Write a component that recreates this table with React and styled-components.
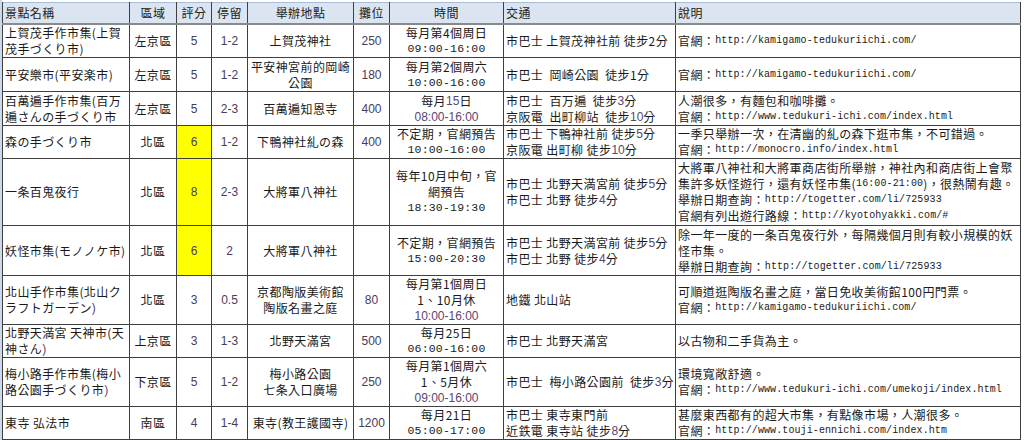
import React from 'react';
import styled, { createGlobalStyle } from 'styled-components';

const GlobalStyle = createGlobalStyle`
  html, body {
    margin: 0;
    padding: 0;
    background: #ffffff;
  }
  body {
    font-family: "Noto Sans CJK TC", "Noto Sans CJK JP", sans-serif;
    color: #1a1a1a;
  }
`;

const columns = [
  { key: 'name', label: '景點名稱', width: 127, align: 'left' },
  { key: 'area', label: '區域', width: 47, align: 'center' },
  { key: 'score', label: '評分', width: 35, align: 'center' },
  { key: 'stay', label: '停留', width: 36, align: 'center' },
  { key: 'place', label: '舉辦地點', width: 106, align: 'center' },
  { key: 'stalls', label: '攤位', width: 36, align: 'center' },
  { key: 'time', label: '時間', width: 114, align: 'center' },
  { key: 'traffic', label: '交通', width: 172, align: 'left' },
  { key: 'note', label: '說明', width: 345, align: 'left' },
];

const numericKeys = ['score', 'stay', 'stalls'];

export default function App() {
  return (
    <>
      <GlobalStyle />
      <Page>
        <Table>
          <colgroup>
            {columns.map((c) => (
              <col key={c.key} style={{ width: c.width }} />
            ))}
          </colgroup>
          <thead>
            <tr>
              {columns.map((c) => (
                <HeadCell key={c.key} $align={c.align}>
                  {c.label}
                </HeadCell>
              ))}
            </tr>
          </thead>
          <tbody>
            {rows.map((row, i) => (
              <Row key={i} $h={row.h}>
                {columns.map((c) => {
                  const value = row[c.key];
                  const lines = Array.isArray(value) ? value : [value];
                  return (
                    <Cell
                      key={c.key}
                      $align={c.align}
                      $mark={c.key === 'score' && row.mark}
                      $numeric={numericKeys.includes(c.key)}
                    >
                      {lines.map((line, j) => (
                        <Line key={j}>{line}</Line>
                      ))}
                    </Cell>
                  );
                })}
              </Row>
            ))}
          </tbody>
        </Table>
      </Page>
    </>
  );
}

// --- STYLED COMPONENTS ---

const Page = styled.div`
  padding: 2px 0 0 0;
  border-left: 2px solid #cbd9ea;
  width: 1018px;
`;

const Table = styled.table`
  width: 1018px;
  table-layout: fixed;
  border-collapse: collapse;
  font-size: 12px;
  letter-spacing: 0.4px;
  border-top: 1px solid #a9bdd6;
`;

const HeadCell = styled.th`
  height: 20px;
  padding: 0 2px;
  background: #dbe5f1;
  font-weight: normal;
  color: #222;
  text-align: ${(p) => p.$align};
  border-left: 1px solid #3f3f3f;
  border-right: 1px solid #3f3f3f;
  border-bottom: 2px solid #8a8a8a;
  line-height: 16px;
  white-space: nowrap;
`;

const Row = styled.tr`
  height: ${(p) => p.$h}px;
`;

const Cell = styled.td`
  padding: 0 2px;
  border: 1px solid #3f3f3f;
  vertical-align: middle;
  text-align: ${(p) => p.$align};
  white-space: pre;
  overflow: hidden;
  background: ${(p) => (p.$mark ? '#ffff00' : '#ffffff')};
  font-family: ${(p) =>
    p.$numeric
      ? '"Liberation Sans", Arial, sans-serif'
      : '"Noto Sans CJK TC", "Noto Sans CJK JP", sans-serif'};
  color: ${(p) => (p.$numeric ? '#4a3b5a' : '#1a1a1a')};
  letter-spacing: ${(p) => (p.$numeric ? '0' : '0.4px')};
`;

const Line = styled.div`
  height: 16px;
  line-height: 16px;
`;

const Num = styled.span`
  font-family: "Liberation Sans", Arial, sans-serif;
  color: #5a4670;
  letter-spacing: 0;
  vertical-align: top;
`;

const Mono = styled.span`
  font-family: "Liberation Mono", "Courier New", monospace;
  font-size: 11.5px;
  letter-spacing: 0.2px;
  vertical-align: top;
`;

const Url = styled.span`
  font-family: "Liberation Mono", "Courier New", monospace;
  font-size: 10px;
  letter-spacing: 0.1px;
  vertical-align: top;
`;

const rows = [
  {
    h: 33,
    name: ['上賀茂手作市集(上賀', '茂手づくり市)'],
    area: '左京區',
    score: '5',
    stay: '1-2',
    place: '上賀茂神社',
    stalls: '250',
    time: ['每月第4個周日', <Mono>09:00-16:00</Mono>],
    traffic: '市巴士 上賀茂神社前 徒步2分',
    note: [<>官網：<Url>http://kamigamo-tedukuriichi.com/</Url></>],
  },
  {
    h: 34,
    name: '平安樂市(平安楽市)',
    area: '左京區',
    score: '5',
    stay: '1-2',
    place: ['平安神宮前的岡崎', '公園'],
    stalls: '180',
    time: ['每月第2個周六', <Mono>10:00-16:00</Mono>],
    traffic: '市巴士  岡崎公園  徒步1分',
    note: [<>官網：<Url>http://kamigamo-tedukuriichi.com/</Url></>],
  },
  {
    h: 34,
    name: ['百萬遍手作市集(百万', '遍さんの手づくり市'],
    area: '左京區',
    score: '5',
    stay: '2-3',
    place: '百萬遍知恩寺',
    stalls: '400',
    time: [<>每月<Num>15</Num>日</>, <Num>08:00-16:00</Num>],
    traffic: [
      <>市巴士  百万遍  徒步<Num>3</Num>分</>,
      <>京阪電  出町柳站  徒步<Num>10</Num>分</>,
    ],
    note: [
      '人潮很多，有麵包和咖啡攤。',
      <>官網：<Url>http://www.tedukuri-ichi.com/index.html</Url></>,
    ],
  },
  {
    h: 33,
    mark: true,
    name: '森の手づくり市',
    area: '北區',
    score: '6',
    stay: '1-2',
    place: '下鴨神社糺の森',
    stalls: '400',
    time: ['不定期，官網預告', <Mono>10:00-16:00</Mono>],
    traffic: [
      <>市巴士 下鴨神社前 徒步<Num>5</Num>分</>,
      <>京阪電 出町柳 徒步<Num>10</Num>分</>,
    ],
    note: [
      '一季只舉辦一次，在清幽的糺の森下逛市集，不可錯過。',
      <>官網：<Url>http://monocro.info/index.html</Url></>,
    ],
  },
  {
    h: 67,
    mark: true,
    name: '一条百鬼夜行',
    area: '北區',
    score: '8',
    stay: '2-3',
    place: '大將軍八神社',
    stalls: '',
    time: ['每年10月中旬，官', '網預告', <Mono>18:30-19:30</Mono>],
    traffic: [
      <>市巴士 北野天満宮前 徒步<Num>5</Num>分</>,
      <>市巴士 北野 徒步<Num>4</Num>分</>,
    ],
    note: [
      '大將軍八神社和大將軍商店街所舉辦，神社內和商店街上會聚',
      <>集許多妖怪遊行，還有妖怪市集(<Url>16:00-21:00</Url>)，很熱鬧有趣。</>,
      <>舉辦日期查詢：<Url>http://togetter.com/li/725933</Url></>,
      <>官網有列出遊行路線：<Url>http://kyotohyakki.com/#</Url></>,
    ],
  },
  {
    h: 50,
    mark: true,
    name: '妖怪市集(モノノケ市)',
    area: '北區',
    score: '6',
    stay: '2',
    place: '大將軍八神社',
    stalls: '',
    time: ['不定期，官網預告', <Mono>15:00-20:30</Mono>],
    traffic: [
      <>市巴士 北野天満宮前 徒步<Num>5</Num>分</>,
      <>市巴士 北野 徒步<Num>4</Num>分</>,
    ],
    note: [
      '除一年一度的一条百鬼夜行外，每隔幾個月則有較小規模的妖',
      '怪市集。',
      <>舉辦日期查詢：<Url>http://togetter.com/li/725933</Url></>,
    ],
  },
  {
    h: 49,
    name: ['北山手作市集(北山ク', <>ラフトガーデン<Num>)</Num></>],
    area: '北區',
    score: '3',
    stay: '0.5',
    place: ['京都陶版美術館', '陶版名畫之庭'],
    stalls: '80',
    time: ['每月第1個周日', '1、10月休', <Num>10:00-16:00</Num>],
    traffic: '地鐵 北山站',
    note: [
      '可順道逛陶版名畫之庭，當日免收美術館100円門票。',
      <>官網：<Url>http://kamigamo-tedukuriichi.com/</Url></>,
    ],
  },
  {
    h: 33,
    name: ['北野天満宮 天神市(天', <>神さん<Num>)</Num></>],
    area: '上京區',
    score: '3',
    stay: '1-3',
    place: '北野天滿宮',
    stalls: '500',
    time: ['每月25日', <Mono>06:00-16:00</Mono>],
    traffic: '市巴士 北野天滿宮',
    note: '以古物和二手貨為主。',
  },
  {
    h: 48,
    name: ['梅小路手作市集(梅小', <>路公園手づくり市<Num>)</Num></>],
    area: '下京區',
    score: '5',
    stay: '1-2',
    place: ['梅小路公園', '七条入口廣場'],
    stalls: '250',
    time: ['每月第1個周六', '1、5月休', <Num>09:00-16:00</Num>],
    traffic: <>市巴士  梅小路公園前  徒步<Num>3</Num>分</>,
    note: [
      '環境寬敞舒適。',
      <>官網：<Url>http://www.tedukuri-ichi.com/umekoji/index.html</Url></>,
    ],
  },
  {
    h: 33,
    name: '東寺 弘法市',
    area: '南區',
    score: '4',
    stay: '1-4',
    place: '東寺(教王護國寺)',
    stalls: '1200',
    time: ['每月21日', <Mono>05:00-17:00</Mono>],
    traffic: [
      '市巴士 東寺東門前',
      <>近鉄電 東寺站 徒步<Num>8</Num>分</>,
    ],
    note: [
      '甚麼東西都有的超大市集，有點像市場，人潮很多。',
      <>官網：<Url>http://www.touji-ennichi.com/index.htm</Url></>,
    ],
  },
];
